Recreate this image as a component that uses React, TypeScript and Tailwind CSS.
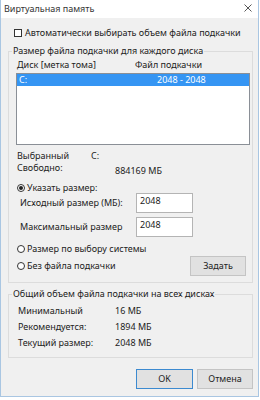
import React from "react";

function Radio({ checked }: { checked?: boolean }) {
  return (
    <span className="flex h-[8px] w-[8px] shrink-0 items-center justify-center rounded-full border border-[#333] bg-white">
      {checked && <span className="h-[4px] w-[4px] rounded-full bg-[#222]" />}
    </span>
  );
}

function Button({ label, primary }: { label: string; primary?: boolean }) {
  return (
    <div
      className={
        "flex h-[20px] items-center justify-center bg-[#e1e1e1] text-[#222] " +
        (primary ? "w-[57px] border border-[#3c8ad0]" : "w-[56px] border border-[#c4c4c4]")
      }
    >
      {label}
    </div>
  );
}

const sizeRows = [
  { label: "Минимальный", value: "16 МБ" },
  { label: "Рекомендуется:", value: "1894 МБ" },
  { label: "Текущий размер:", value: "2048 МБ" },
];

export default function App() {
  return (
    <div className="h-[400px] w-[260px] bg-white font-['Noto_Sans',sans-serif] text-[9px] leading-[12px] text-[#222]">
      <div className="flex h-[397px] w-[259px] flex-col border-x border-b border-[#a9c6e2]">
        {/* title bar */}
        <div className="flex h-[18px] items-center justify-between bg-white pl-[3px] pr-[6px] text-[#333]">
          <span>Виртуальная память</span>
          <svg width="8" height="8" viewBox="0 0 8 8" className="mb-[2px]">
            <path d="M0.5 0.5 L7.5 7.5 M7.5 0.5 L0.5 7.5" stroke="#444" strokeWidth="0.9" />
          </svg>
        </div>

        <div className="flex flex-1 flex-col bg-[#f0f0f0]">
          <div className="mt-[9px] flex h-[12px] items-center pl-[13px]">
            <span className="mr-[3px] h-[8px] w-[8px] border border-[#333] bg-white" />
            <span>Автоматически выбирать объем файла подкачки</span>
          </div>

          {/* per-disk group */}
          <fieldset className="ml-[7px] mr-[5px] mt-[6px] border border-[#dcdcdc] pb-[6px]">
            <legend className="ml-[3px] px-[1px]">Размер файла подкачки для каждого диска</legend>
            <div className="mt-[2px] flex h-[12px] items-center pl-[8px]">
              <span className="w-[118px]">Диск [метка тома]</span>
              <span>Файл подкачки</span>
            </div>
            <div className="ml-[7px] mt-[2px] h-[72px] w-[234px] border border-[#8a8f96] bg-white">
              <div className="flex h-[12px] items-center bg-[#3595f3] pl-[2px] text-white">
                <span className="w-[138px]">C:</span>
                <span>2048 - 2048</span>
              </div>
            </div>

            <div className="mt-[5px] flex h-[12px] items-center pl-[8px]">
              <span className="w-[74px]">Выбранный</span>
              <span>C:</span>
            </div>
            <div className="flex h-[15px] items-start pl-[8px]">
              <span className="w-[98px]">Свободно:</span>
              <span className="mt-[3px]">884169 МБ</span>
            </div>

            <div className="mt-[5px] flex h-[11px] items-center gap-[2px] pl-[8px]">
              <Radio checked />
              <span>Указать размер:</span>
            </div>
            <div className="flex h-[20px] items-center pl-[11px]">
              <span className="w-[116px]">Исходный размер (МБ):</span>
              <div className="h-[20px] w-[57px] border border-[#b4b4b4] bg-white pl-[3px] pt-[1px]">2048</div>
            </div>
            <div className="mt-[4px] flex h-[20px] items-center pl-[11px]">
              <span className="w-[116px]">Максимальный размер</span>
              <div className="h-[20px] w-[57px] border border-[#b4b4b4] bg-white pl-[3px] pt-[1px]">2048</div>
            </div>

            <div className="mt-[6px] flex h-[12px] items-center gap-[2px] pl-[8px]">
              <Radio />
              <span>Размер по выбору системы</span>
            </div>
            <div className="mt-[1px] flex h-[20px] items-center gap-[2px] pl-[8px] pr-[6px]">
              <Radio />
              <span>Без файла подкачки</span>
              <div className="ml-auto">
                <Button label="Задать" />
              </div>
            </div>
          </fieldset>

          {/* totals group */}
          <fieldset className="ml-[7px] mr-[5px] mt-[5px] border border-[#dcdcdc] pb-[8px]">
            <legend className="ml-[3px] px-[1px]">Общий объем файла подкачки на всех дисках</legend>
            <div className="mt-[5px] flex flex-col gap-[4px] pl-[9px]">
              {sizeRows.map((row) => (
                <div key={row.label} className="flex h-[12px] items-center">
                  <span className="w-[97px]">{row.label}</span>
                  <span>{row.value}</span>
                </div>
              ))}
            </div>
          </fieldset>

          <div className="mt-[11px] flex justify-end gap-[4px] pr-[5px]">
            <Button label="OK" primary />
            <Button label="Отмена" />
          </div>
        </div>
      </div>
    </div>
  );
}
